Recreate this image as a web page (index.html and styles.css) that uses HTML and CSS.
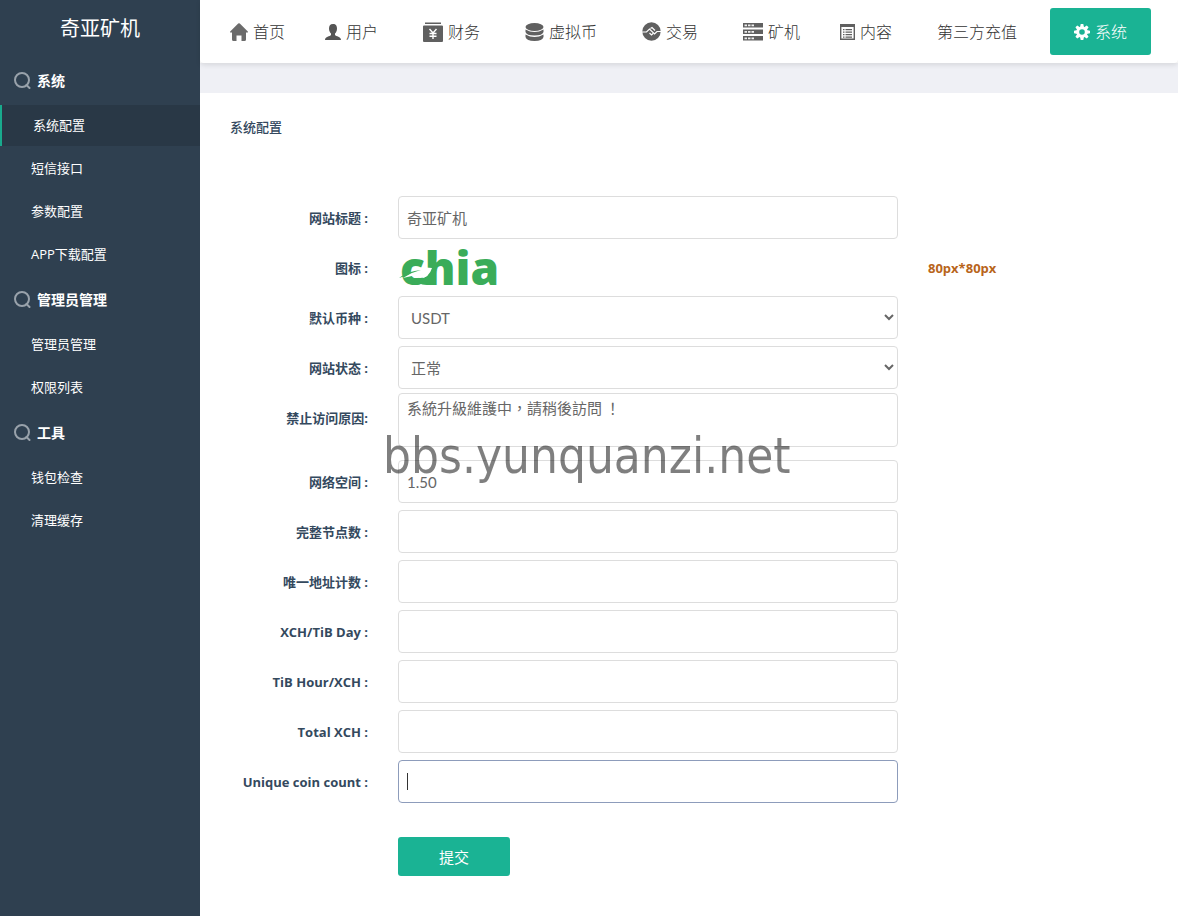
FILE: index.html
```html
<!DOCTYPE html>
<html lang="zh-CN">
<head>
    <meta charset="UTF-8">
    <meta name="viewport" content="width=device-width, initial-scale=1.0">
    <title>奇亚矿机</title>
    <link rel="stylesheet" href="styles.css">
</head>
<body>

<svg class="sprite" aria-hidden="true">
    <symbol id="icon-search" viewBox="0 0 18 18">
        <circle cx="8" cy="9" r="7" fill="none" stroke="currentColor" stroke-width="2"/>
        <path d="M12.500 14l3 3" stroke="currentColor" stroke-width="2" stroke-linecap="round"/>
    </symbol>
</svg>

<aside class="sidebar">
    <div class="brand">奇亚矿机</div>
    <nav>
        <h3 class="menu-title"><svg class="menu-icon"><use href="#icon-search"/></svg>系统</h3>
        <a class="menu-item active" href="#">系统配置</a>
        <a class="menu-item" href="#">短信接口</a>
        <a class="menu-item" href="#">参数配置</a>
        <a class="menu-item" href="#">APP下载配置</a>

        <h3 class="menu-title"><svg class="menu-icon"><use href="#icon-search"/></svg>管理员管理</h3>
        <a class="menu-item" href="#">管理员管理</a>
        <a class="menu-item" href="#">权限列表</a>

        <h3 class="menu-title"><svg class="menu-icon"><use href="#icon-search"/></svg>工具</h3>
        <a class="menu-item" href="#">钱包检查</a>
        <a class="menu-item" href="#">清理缓存</a>
    </nav>
</aside>

<div class="page">
    <header class="topbar">
        <nav class="nav-list">
            <a class="nav-link" href="#">
                <svg width="18" height="18" viewBox="0 0 18 18"><path d="M8.200.6q.8-.7 1.600 0l8 8q.5 1-.6 1H16V16.500q0 1.500-1.500 1.500h-3v-5.500h-5V18h-3Q2 18 2 16.500V9.600H.8q-1.100 0-.6-1z" fill="#6b6b6b"/></svg>
                首页
            </a>
            <a class="nav-link nav-tight" href="#">
                <svg width="16" height="16" viewBox="0 0 16 16"><path d="M8 0c3 0 4 2 4 4.500C12 7 11 8.500 10 9.500v1.500c1 1.500 6 1.500 6 5H0c0-3.500 5-3.500 6-5V9.500C5 8.500 4 7 4 4.500 4 2 5 0 8 0z" fill="#555"/></svg>
                用户
            </a>
            <a class="nav-link" href="#">
                <svg width="20" height="20" viewBox="0 0 20 20"><path d="M2 .5h16v1.500H2zM1 3.500h18q1 0 1 1V19q0 1-1 1H1q-1 0-1-1V4.500q0-1 1-1z" fill="#606060"/><path d="M6.500 7l3.500 4 3.500-4M10 11v6M6.500 11.500h7M6.500 14.200h7" fill="none" stroke="#fff" stroke-width="1.400"/></svg>
                财务
            </a>
            <a class="nav-link" href="#">
                <svg width="19" height="18" viewBox="0 0 19 18"><ellipse cx="9.500" cy="4" rx="9" ry="4" fill="#606060"/><path d="M.5 6.500q9 5 18 0v2.500q-1 3.500-9 3.500T.5 9zM.5 11.500q9 5 18 0v2.500q-1 4-9 4t-9-4z" fill="#606060"/></svg>
                虚拟币
            </a>
            <a class="nav-link" href="#">
                <svg width="19" height="19" viewBox="0 0 19 19"><circle cx="9.500" cy="9.500" r="9.200" fill="#606060"/><path d="M0 10h4.500l3-3 5 5 2.500-2.500h4M7.500 11l2 2 1.500-1.500M8.500 6.500l1.500-1 3 3" fill="none" stroke="#fff" stroke-width="1.200"/></svg>
                交易
            </a>
            <a class="nav-link" href="#">
                <svg width="20" height="18" viewBox="0 0 20 18"><path d="M0 0h20v4.500H0zM0 6.500h20v4.500H0zM0 13h20v4.500H0z" fill="#606060"/><path d="M1.500 2.300h9.500M1.500 8.800h9.500M1.500 15.300h9.500" stroke="#eee" stroke-width="1.800" stroke-dasharray="2.500 1"/></svg>
                矿机
            </a>
            <a class="nav-link nav-tight" href="#">
                <svg width="15" height="16" viewBox="0 0 15 16"><path d="M.7 1h13.600v14.300H.7z" fill="none" stroke="#606060" stroke-width="1.400"/><path d="M0 0h15v3H0z" fill="#606060"/><path d="M3 5.700h1.500M5.500 5.700H12M3 8.200h1.500M5.500 8.200H12M3 10.700h1.500M5.500 10.700H12M3 13.100h1.500M5.500 13.100H12" stroke="#606060" stroke-width="1.200"/></svg>
                内容
            </a>
            <a class="nav-link" href="#">第三方充值</a>
        </nav>
        <a class="nav-link nav-active" href="#">
            <svg width="16" height="16" viewBox="-8 -8 16 16"><g fill="#fff"><path id="tooth" d="M-1.300-8h2.600l.7 3.500h-4zM-1.300 8h2.600l.7-3.500h-4z"/><use href="#tooth" transform="rotate(45)"/><use href="#tooth" transform="rotate(90)"/><use href="#tooth" transform="rotate(135)"/></g><circle r="4.200" fill="none" stroke="#fff" stroke-width="2.800"/></svg>
            系统
        </a>
    </header>

    <main class="content">
        <h1 class="page-title">系统配置</h1>

        <form class="config-form">
            <div class="form-row">
                <label for="title">网站标题 :</label>
                <div class="field"><input class="control" type="text" id="title" value="奇亚矿机"></div>
            </div>
            <div class="form-row">
                <span class="label">图标 :</span>
                <div class="field">
                    <svg class="logo" width="106" height="43" viewBox="0 0 106 43" role="img" aria-label="chia">
                        <text class="logo-text" x="2" y="39">chia</text>
                        <path d="M17 33q9 1 15-6v12q-7 0-9-1-3 1-7 1z" fill="#3aac59"/>
                        <path d="M12 28q4-5 10-6 6-1 12 0-3 10-12 10-5 0-8-2-5 1-9 2z" fill="#fff"/>
                        <path d="M1 32q9-7 22-8-10 3-16 6z" fill="#3aac59"/>
                    </svg>
                </div>
                <span class="hint">80px*80px</span>
            </div>
            <div class="form-row">
                <label for="coin">默认币种 :</label>
                <div class="field">
                    <select class="control" id="coin"><option>USDT</option></select>
                </div>
            </div>
            <div class="form-row">
                <label for="status">网站状态 :</label>
                <div class="field">
                    <select class="control" id="status"><option>正常</option></select>
                </div>
            </div>
            <div class="form-row">
                <label for="reason">禁止访问原因:</label>
                <div class="field field-area">
                    <textarea class="control" id="reason" lang="zh-TW">系統升級維護中，請稍後訪問 ！</textarea>
                </div>
            </div>
            <div class="form-row">
                <label for="space">网络空间 :</label>
                <div class="field"><input class="control" type="text" id="space" value="1.50"></div>
            </div>
            <div class="form-row">
                <label for="nodes">完整节点数 :</label>
                <div class="field"><input class="control" type="text" id="nodes"></div>
            </div>
            <div class="form-row">
                <label for="address">唯一地址计数 :</label>
                <div class="field"><input class="control" type="text" id="address"></div>
            </div>
            <div class="form-row">
                <label for="xch-day">XCH/TiB Day :</label>
                <div class="field"><input class="control" type="text" id="xch-day"></div>
            </div>
            <div class="form-row">
                <label for="tib-hour">TiB Hour/XCH :</label>
                <div class="field"><input class="control" type="text" id="tib-hour"></div>
            </div>
            <div class="form-row">
                <label for="total">Total XCH :</label>
                <div class="field"><input class="control" type="text" id="total"></div>
            </div>
            <div class="form-row">
                <label for="unique">Unique coin count :</label>
                <div class="field"><input class="control" type="text" id="unique" autofocus></div>
            </div>
            <button class="submit" type="submit">提交</button>
        </form>
    </main>
</div>

<div class="watermark">bbs.yunquanzi.net</div>

</body>
</html>
```

FILE: styles.css
```css
* {
    box-sizing: border-box;
}

body {
    margin: 0;
    display: flex;
    min-height: 100vh;
    position: relative;
    font-family: "Open Sans", "Noto Sans CJK SC", sans-serif;
    font-size: 13px;
    color: #34495e;
    background: #fff;
}

a {
    color: inherit;
    text-decoration: none;
}

.sprite {
    position: absolute;
    width: 0;
    height: 0;
}

/* sidebar */
.sidebar {
    flex: none;
    width: 200px;
    background: #2f4050;
    color: #fff;
}

.brand {
    height: 58px;
    line-height: 58px;
    font-size: 20px;
    text-align: center;
}

.menu-title {
    display: flex;
    align-items: center;
    gap: 5px;
    height: 47px;
    margin: 0;
    padding: 0 0 3px 14px;
    font-size: 14px;
    font-weight: bold;
}

.menu-icon {
    width: 18px;
    height: 18px;
    color: #99a2ab;
}

.menu-item {
    display: block;
    height: 41px;
    line-height: 40px;
    margin-bottom: 2px;
    padding-left: 31px;
}

.menu-item.active {
    background: #293846;
    border-left: 2px solid #19aa8d;
}

/* top navigation */
.page {
    flex: 1;
    min-width: 0;
}

.topbar {
    position: relative;
    display: flex;
    align-items: center;
    justify-content: space-between;
    height: 63px;
    padding: 0 27px 0 30px;
    background: #fff;
    border-radius: 0 0 4px 4px;
    box-shadow: 0 2px 5px rgba(0, 0, 0, 0.1);
}

.nav-list {
    display: flex;
    gap: 45px;
}

.nav-link {
    display: flex;
    align-items: center;
    gap: 5px;
    font-size: 16px;
    font-weight: 300;
    line-height: 22px;
    color: #333;
    white-space: nowrap;
}

.nav-tight {
    margin-left: -5px;
}

.nav-active {
    height: 47px;
    padding: 0 24px;
    border-radius: 3px;
    background: #1ab394;
    color: #fff;
}

/* form */
.content {
    margin-top: 30px;
    padding: 24px 30px;
    background: #fff;
    box-shadow: 0 -30px 0 #eff0f5;
}

.page-title {
    margin: 0 0 56px;
    font-size: 13px;
    line-height: 20px;
    font-weight: 500;
}

.form-row {
    display: flex;
    gap: 30px;
    min-height: 50px;
}

.form-row label,
.label {
    flex: none;
    width: 138px;
    line-height: 50px;
    font-weight: bold;
    text-align: right;
}

.field {
    flex: 0 1 500px;
    padding-top: 3px;
}

.field-area {
    padding: 0 0 10px;
}

.control {
    display: block;
    width: 100%;
    height: 43px;
    padding: 0 8px;
    border: 1px solid #ddd;
    border-radius: 4px;
    background: #fff;
    font-family: Lato, "Noto Sans CJK SC", sans-serif;
    font-size: 15px;
    color: #666;
}

.control:focus {
    outline: none;
    border-color: #8d9cbb;
}

/* thin steady caret in an empty focused input */
input.control:focus {
    caret-color: transparent;
    background: linear-gradient(#333, #333) 8px center / 1px 17px no-repeat #fff;
}

textarea.control {
    height: 54px;
    padding-top: 3px;
    font-family: "Noto Sans CJK TC", sans-serif;
    resize: none;
}

.logo {
    display: block;
    overflow: visible;
}

.logo-text {
    font-family: "Open Sans", sans-serif;
    font-size: 46px;
    font-weight: 800;
    fill: #3aac59;
}

.hint {
    line-height: 50px;
    font-weight: bold;
    color: #b8651b;
}

.submit {
    display: block;
    width: 112px;
    height: 39px;
    margin: 30px 0 0 168px;
    border: none;
    border-radius: 3px;
    background: #1ab394;
    color: #fff;
    font-family: inherit;
    font-size: 15px;
    cursor: pointer;
}

.watermark {
    position: absolute;
    left: 383px;
    top: 427px;
    font-family: "DejaVu Sans Condensed", "DejaVu Sans", sans-serif;
    font-size: 49px;
    line-height: 60px;
    color: rgba(0, 0, 0, 0.5);
    pointer-events: none;
}
```
